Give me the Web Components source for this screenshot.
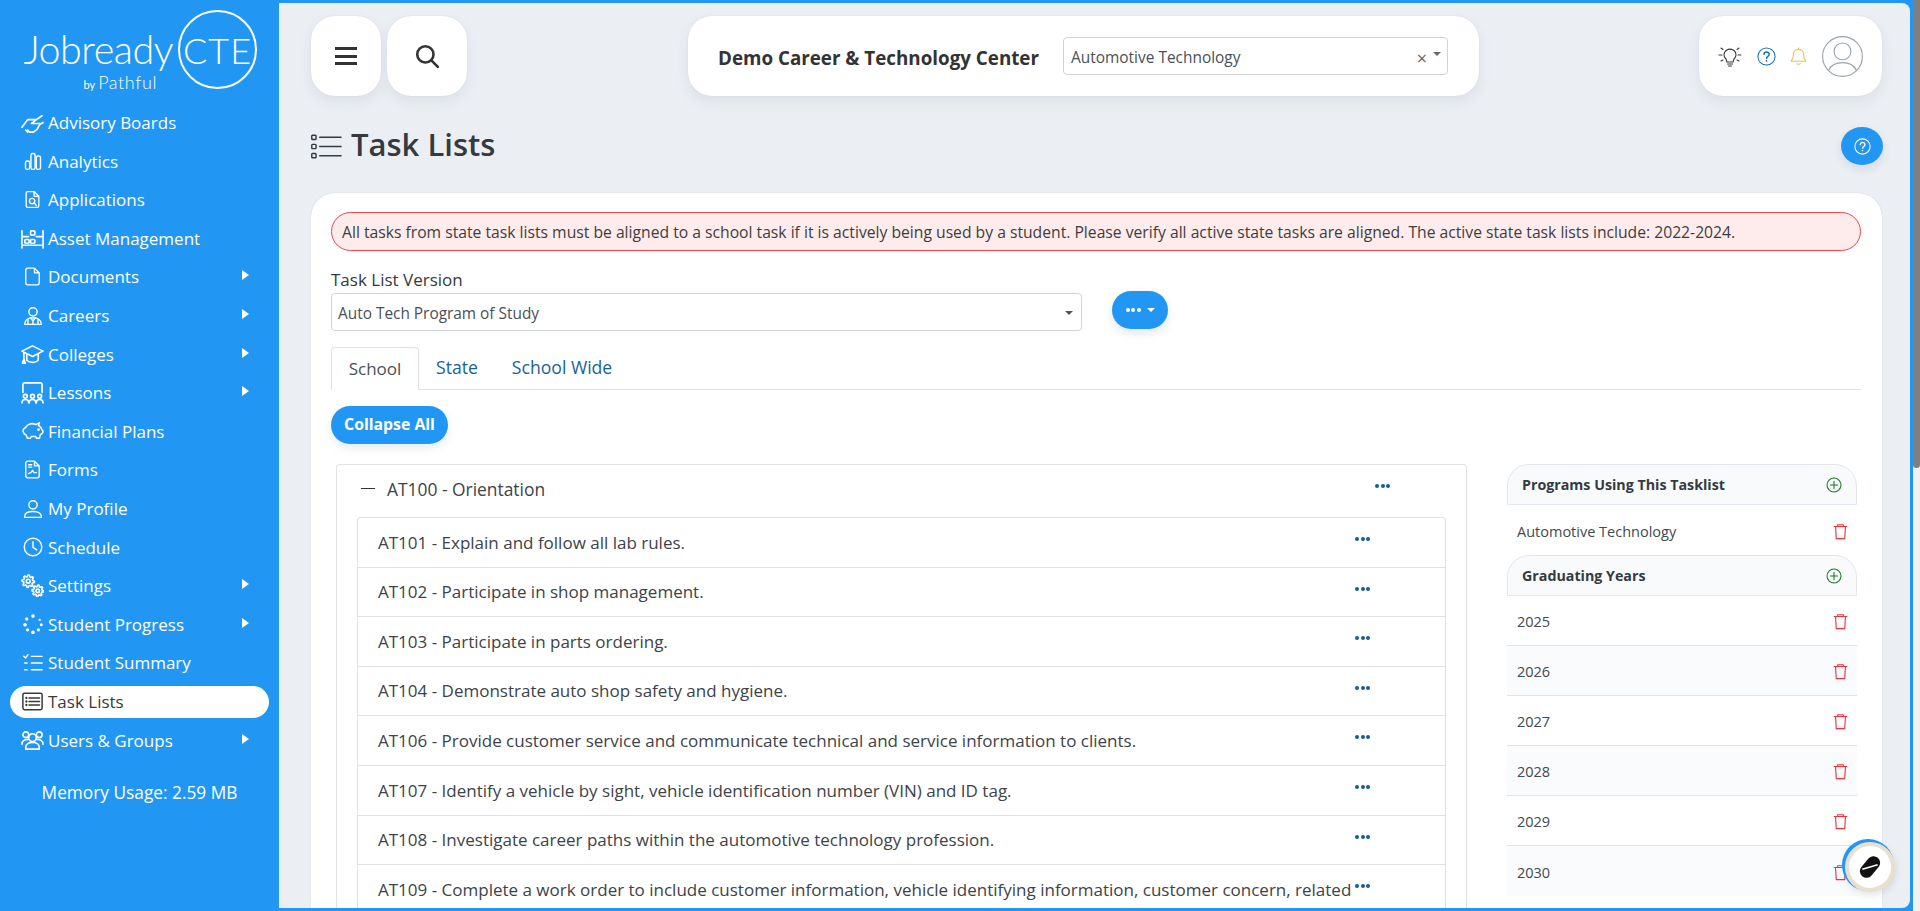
<!DOCTYPE html>
<html lang="en">
<head>
<meta charset="utf-8">
<title>Task Lists</title>
<style>
  html, body { margin: 0; height: 100%; overflow: hidden; background: #2196f3; }
  body { font-family: "Open Sans", "Liberation Sans", sans-serif; color: #343a40; }
</style>
</head>
<body>
<app-shell>
  <side-nav slot="nav"></side-nav>
  <top-bar></top-bar>
  <page-title></page-title>
  <task-card></task-card>
</app-shell>

<script>
// small gear outline, teeth are just a wobble on the radius
function gear(cx, cy, r, inner) {
  let d = '';
  const n = 8;
  for (let i = 0; i < n * 4; i++) {
    const a = (i / (n * 4)) * Math.PI * 2;
    const rad = (i % 4 < 2) ? r : inner;
    d += `${i ? 'L' : 'M'}${(cx + Math.cos(a) * rad).toFixed(2)} ${(cy + Math.sin(a) * rad).toFixed(2)}`;
  }
  return `<path d="${d}z"/>`;
}

const ICONS = {
  handshake: '<path d="M1 17L7 9h9l-5 4h9l-3 6-4 3H9l-2-2M16 9l6-4M20 14l3-2M5 20l2 2"/>',
  bars: '<rect x="3" y="12" width="5" height="10" rx="2"/><rect x="9.500" y="3" width="5" height="19" rx="2"/><rect x="16" y="6" width="5" height="16" rx="2"/>',
  filesearch: '<path d="M6 2h8l6 6v12a2 2 0 0 1-2 2H6a2 2 0 0 1-2-2V4a2 2 0 0 1 2-2zM14 2v6h6"/><circle cx="11.500" cy="14" r="3.400"/><path d="M14 16.500l3 3"/>',
  asset: '<path d="M1 4v18M23 4v18M1 10h7M16 10h7M1 19h22"/><rect x="4" y="13" width="4.500" height="4" rx="1"/><rect x="10" y="13" width="4.500" height="4" rx="1"/><rect x="10" y="4" width="4.500" height="4.500" rx="1"/>',
  file: '<path d="M6 1.500h8.500l6 6V20a2.500 2.500 0 0 1-2.500 2.500H6A2.500 2.500 0 0 1 3.500 20V4A2.500 2.500 0 0 1 6 1.500zM14.500 1.500v6h6"/>',
  career: '<circle cx="12" cy="7" r="5"/><path d="M2 22c0-5 4-8 10-8s10 3 10 8zM9 14l3 4 3-4M12 18v4M6 16v6M18 16v6"/>',
  cap: '<path d="M12 3L1 8.500 12 14l11-5.500zM6 11.500V18c3 3 9 3 12 0v-6.500M3 10v7"/><path d="M1.500 21l1.500-4 1.500 4z"/>',
  lesson: '<path d="M2 12V4a2 2 0 0 1 2-2h16a2 2 0 0 1 2 2v8"/><circle cx="4.500" cy="16" r="2"/><circle cx="12" cy="16" r="2"/><circle cx="19.500" cy="16" r="2"/><path d="M1 23c0-5 7-5 7 0M8.500 23c0-5 7-5 7 0M16 23c0-5 7-5 7 0"/>',
  piggy: '<path d="M3 9c-3 1-2 6 1 7 1 1 1 2 2 4h3l1-2h5l1 2h3l1-4c2-1 3-2 3-4l-1-1c-1-3-2-4-4-5l1-3-4 2c-4-2-9-1-11 3z"/><circle cx="18" cy="10.500" r=".6"/>',
  form: '<path d="M6 1.500h8.500l6 6V20a2.500 2.500 0 0 1-2.500 2.500H6A2.500 2.500 0 0 1 3.500 20V4A2.500 2.500 0 0 1 6 1.500zM14.500 1.500v6h6M7 6h4M7 9h4M7 17l3-1 2-3 2 3h3"/>',
  user: '<circle cx="12" cy="7" r="5"/><path d="M2 22v-1c0-4 4-6 10-6s10 2 10 6v1z"/>',
  clock: '<circle cx="12" cy="12" r="10.500"/><path d="M12 5.500V12.500l4.500 3"/>',
  gears: `${gear(7.500, 7.500, 6.500, 4.800)}<circle cx="7.500" cy="7.500" r="2"/>${gear(17.500, 17.500, 6, 4.400)}<circle cx="17.500" cy="17.500" r="1.800"/>`,
  progress: '<g fill="currentColor" stroke="none"><circle cx="12" cy="2.500" r="2.200"/><circle cx="20" cy="7" r="1.400"/><circle cx="22" cy="13" r="1.800"/><circle cx="18.500" cy="19" r="2"/><circle cx="12" cy="22" r="2.200"/><circle cx="5.500" cy="19" r="2"/><circle cx="2.500" cy="13" r="2.200"/><circle cx="4.500" cy="6" r="2"/></g>',
  summary: '<path d="M1 4l2 2 3-4M10 4h13M10 12h13M10 20h13M2 12h3M2 20h3"/>',
  list: '<rect x="1" y="2.500" width="22" height="19" rx="2"/><path d="M8 8h12M8 12h12M8 16h12"/><g fill="currentColor" stroke="none"><circle cx="5" cy="8" r="1.300"/><circle cx="5" cy="12" r="1.300"/><circle cx="5" cy="16" r="1.300"/></g>',
  users: '<circle cx="5" cy="6" r="3"/><circle cx="19" cy="6" r="3"/><circle cx="12" cy="9" r="4"/><path d="M1 16c0-3 2-5 6-5M23 16c0-3-2-5-6-5M5 21v-2c0-3 3-5 7-5s7 2 7 5v2z"/>',
  search: '<circle cx="10.500" cy="10.500" r="7.500" stroke-width="2.400"/><path d="M16 16l6 6" stroke-width="2.400" stroke-linecap="round"/>',
  help: '<circle cx="12" cy="12" r="10.800"/><path d="M8.800 9.400c0-4.200 6.600-4.200 6.600 0 0 2.600-3.300 2.400-3.300 5" stroke-width="1.900"/><circle cx="12" cy="17.600" r="1.100" fill="currentColor" stroke="none"/>',
  bulb: '<path d="M8 15c-2-2-2.500-4-1.500-6.500C9 4 15 4 17.500 8.500c1 2.500.5 4.500-1.500 6.500l-1 3H9zM9.500 20h5M10.500 22h3M4 11H1M23 11h-3M5 5.500L3 4M19 5.500L21 4M5 16l-2 1M19 16l2 1"/>',
  bell: '<path d="M12 3c-4.500 0-6.500 3-6.500 7 0 4-1 6-3 8h19c-2-2-3-4-3-8 0-4-2-7-6.500-7zM12 1v2M10 21c1 1.200 3 1.200 4 0"/>',
  avatar: '<circle cx="20" cy="20" r="19.400"/><circle cx="20" cy="15" r="8.200"/><path d="M6.500 33.500C9 28 14 26 20 26s11 2 13.500 7.500"/>',
  plus: '<circle cx="12" cy="12" r="10.500"/><path d="M12 6.500v11M6.500 12h11"/>',
  trash: '<path d="M3 5h18M8 5V2.500h8V5M5 5l1 17h12l1-17"/>',
  outline: '<g fill="none"><rect x="0.800" y="0.800" width="4.400" height="4.400" rx=".8"/><rect x="0.800" y="10.300" width="4.400" height="4.400" rx=".8"/><rect x="0.800" y="19.800" width="4.400" height="4.400" rx=".8"/><path d="M9 3h22M9 12.500h22M9 22h22"/></g>',
};

class IconGlyph extends HTMLElement {
  constructor() {
    super();
    this.shadowDOM = this.attachShadow({ mode: 'open' });
  }

  connectedCallback() {
    const name = this.getAttribute('name');
    const w = this.getAttribute('w') || 24;
    const h = this.getAttribute('h') || w;
    const box = this.getAttribute('box') || '0 0 24 24';
    const sw = this.getAttribute('sw') || 1.6;
    this.shadowDOM.innerHTML = `
      <style>
        :host { display: inline-flex; flex: none; align-items: center; justify-content: center; line-height: 0; }
        svg { fill: none; stroke: currentColor; stroke-linejoin: round; stroke-linecap: round; }
      </style>
      <svg width="${w}" height="${h}" viewBox="${box}" stroke-width="${sw}">${ICONS[name]}</svg>`;
  }
}
customElements.define('icon-glyph', IconGlyph);

class NavItem extends HTMLElement {
  constructor() {
    super();
    this.shadowDOM = this.attachShadow({ mode: 'open' });
  }

  connectedCallback() {
    const caret = this.hasAttribute('caret') ? '<span class="caret"></span>' : '';
    this.shadowDOM.innerHTML = `
      <style>
        :host { display: flex; align-items: center; height: 38.6px; margin: 0 10px; padding-left: 11px; padding-right: 20px; border-radius: 17px; color: #fff; font-size: 17px; box-sizing: border-box; }
        :host([active]) { background: #fff; color: #3a3a3a; height: 32px; margin-top: 3.300px; margin-bottom: 3.300px; }
        .ic { width: 23px; display: flex; justify-content: center; margin-right: 4px; }
        .label { flex: 1; }
        .caret { width: 0; height: 0; border-left: 7px solid #fff; border-top: 5.500px solid transparent; border-bottom: 5.500px solid transparent; margin-top: -3px; }
      </style>
      <span class="ic"><icon-glyph name="${this.getAttribute('icon')}" w="${this.getAttribute('w') || 20}" sw="1.700"></icon-glyph></span>
      <span class="label"><slot></slot></span>${caret}`;
  }
}
customElements.define('nav-item', NavItem);

class SideNav extends HTMLElement {
  constructor() {
    super();
    this.shadowDOM = this.attachShadow({ mode: 'open' });
  }

  connectedCallback() {
    const items = [
      ['handshake', 'Advisory Boards', 0, 23], ['bars', 'Analytics', 0, 20], ['filesearch', 'Applications', 0, 19],
      ['asset', 'Asset Management', 0, 23], ['file', 'Documents', 1, 19], ['career', 'Careers', 1, 20],
      ['cap', 'Colleges', 1, 23], ['lesson', 'Lessons', 1, 23], ['piggy', 'Financial Plans', 0, 22],
      ['form', 'Forms', 0, 19], ['user', 'My Profile', 0, 20], ['clock', 'Schedule', 0, 20],
      ['gears', 'Settings', 1, 23], ['progress', 'Student Progress', 1, 20], ['summary', 'Student Summary', 0, 20],
      ['list', 'Task Lists', 0, 21, 1], ['users', 'Users & Groups', 1, 23],
    ];
    const html = items.map(([icon, label, caret, w, active]) => `
      <nav-item icon="${icon}" w="${w}" ${caret ? 'caret' : ''} ${active ? 'active' : ''}>${label.replace('&', '&amp;')}</nav-item>`).join('');
    this.shadowDOM.innerHTML = `
      <style>
        :host { display: block; width: 279px; flex: none; color: #fff; }
        .logo { height: 100.300px; display: flex; padding: 7px 0 0 21px; box-sizing: border-box; font-family: "Lato", sans-serif; }
        .word { display: flex; flex-direction: column; align-items: flex-end; margin-top: 18px; width: 157px; }
        .jobready { font-size: 39.500px; font-weight: 300; line-height: 41px; letter-spacing: -.5px; margin-right: 5px; }
        .by { font-size: 11px; line-height: 20px; margin-top: 3px; margin-right: 21px; }
        .by b { font-size: 18px; font-weight: 300; letter-spacing: .6px; margin-left: 3px; }
        .cte { width: 79px; height: 79px; box-sizing: border-box; border: 2px solid #fff; border-radius: 50%; display: flex; align-items: center; justify-content: center; font-size: 36px; font-weight: 300; letter-spacing: 1px; flex: none; }
        .mem { text-align: center; font-size: 17.300px; margin-top: 24px; line-height: 20px; }
      </style>
      <div class="logo">
        <div class="word">
          <span class="jobready">Jobready</span>
          <span class="by">by<b>Pathful</b></span>
        </div>
        <div class="cte">CTE</div>
      </div>
      ${html}
      <div class="mem">Memory Usage: 2.59 MB</div>`;
  }
}
customElements.define('side-nav', SideNav);

class ToolCard extends HTMLElement {
  constructor() {
    super();
    this.shadowDOM = this.attachShadow({ mode: 'open' });
  }

  connectedCallback() {
    this.shadowDOM.innerHTML = `
      <style>
        :host { display: flex; align-items: center; justify-content: center; height: 80px; background: #fff; border-radius: 24px; box-shadow: 0 6px 14px rgba(60, 80, 110, .08), 0 0 1px rgba(60, 80, 110, .2); box-sizing: border-box; }
      </style>
      <slot></slot>`;
  }
}
customElements.define('tool-card', ToolCard);

class TopBar extends HTMLElement {
  constructor() {
    super();
    this.shadowDOM = this.attachShadow({ mode: 'open' });
  }

  connectedCallback() {
    this.shadowDOM.innerHTML = `
      <style>
        :host { display: flex; justify-content: space-between; align-items: flex-start; color: #343a40; }
        .left { display: flex; gap: 6px; }
        .burger { display: flex; flex-direction: column; gap: 4.500px; width: 22px; }
        .burger i { display: block; height: 3px; background: #333; }
        .school { font-size: 18.800px; font-weight: 700; margin-right: 24px; color: #333; margin-top: 3px; white-space: nowrap; }
        .pick { width: 385px; height: 38px; box-sizing: border-box; border: 1px solid #cfd3d9; border-radius: 4px; display: flex; align-items: center; padding: 1px 6px 0 7px; font-size: 15.450px; color: #495057; }
        .pick span { flex: 1; }
        .x { color: #666; font-size: 18px; margin-right: 6px; font-style: normal; margin-top: 3px; }
        .arrow { width: 0; height: 0; border-left: 4px solid transparent; border-right: 4px solid transparent; border-top: 4px solid #666; margin-top: -6px; }
      </style>
      <div class="left">
        <tool-card style="width:70px"><div class="burger"><i></i><i></i><i></i></div></tool-card>
        <tool-card style="width:80px;color:#333"><icon-glyph name="search" w="26"></icon-glyph></tool-card>
      </div>
      <tool-card style="width:791px">
        <span class="school">Demo Career &amp; Technology Center</span>
        <div class="pick"><span>Automotive Technology</span><i class="x">×</i><i class="arrow"></i></div>
      </tool-card>
      <tool-card style="width:183px;justify-content:flex-start;padding-left:19px">
        <icon-glyph name="bulb" w="24" sw="1.100" style="color:#3a3a3a"></icon-glyph>
        <icon-glyph name="help" w="19" sw="1.300" style="color:#1a6fae;margin-left:15px"></icon-glyph>
        <icon-glyph name="bell" w="19" sw="1.300" style="color:#f0c040;margin-left:13px"></icon-glyph>
        <icon-glyph name="avatar" w="41" box="0 0 40 40" sw="1.100" style="color:#9aa3ad;margin-left:14px"></icon-glyph>
      </tool-card>`;
  }
}
customElements.define('top-bar', TopBar);

class PageTitle extends HTMLElement {
  constructor() {
    super();
    this.shadowDOM = this.attachShadow({ mode: 'open' });
  }

  connectedCallback() {
    this.shadowDOM.innerHTML = `
      <style>
        :host { display: flex; align-items: center; height: 38px; margin-top: 31px; margin-bottom: 28px; color: #343a40; }
        .list { margin-right: 9px; }
        h1 { margin: -5px 0 0; flex: 1; font-size: 31px; font-weight: 600; line-height: 38px; }
        .help { width: 42px; height: 38px; margin-right: -1px; border-radius: 50%; background: #2196f3; color: #fff; display: flex; align-items: center; justify-content: center; box-shadow: 0 4px 10px rgba(60, 80, 110, .12); }
      </style>
      <icon-glyph class="list" name="outline" w="31" h="25" box="0 0 32 25" sw="1.500"></icon-glyph>
      <h1>Task Lists</h1>
      <div class="help"><icon-glyph name="help" w="17" sw="1.500"></icon-glyph></div>`;
  }
}
customElements.define('page-title', PageTitle);

class TaskRow extends HTMLElement {
  constructor() {
    super();
    this.shadowDOM = this.attachShadow({ mode: 'open' });
  }

  connectedCallback() {
    this.shadowDOM.innerHTML = `
      <style>
        :host { display: flex; padding: 11.550px 76px 11.550px 20px; border-bottom: 1px solid #dfe1e4; font-size: 17px; line-height: 25.500px; color: #3d4349; position: relative; }
        span { flex: 1; }
        dot-menu { position: absolute; right: 75px; top: 19px; }
      </style>
      <span><slot></slot></span>
      <dot-menu></dot-menu>`;
  }
}
customElements.define('task-row', TaskRow);

class DotMenu extends HTMLElement {
  constructor() {
    super();
    this.shadowDOM = this.attachShadow({ mode: 'open' });
  }

  connectedCallback() {
    const c = this.getAttribute('color') || '#155e95';
    this.shadowDOM.innerHTML = `
      <style>
        :host { display: inline-flex; gap: 1.500px; }
        i { width: 4px; height: 4px; border-radius: 50%; background: ${c}; }
      </style>
      <i></i><i></i><i></i>`;
  }
}
customElements.define('dot-menu', DotMenu);

class SideList extends HTMLElement {
  constructor() {
    super();
    this.shadowDOM = this.attachShadow({ mode: 'open' });
  }

  connectedCallback() {
    const title = this.getAttribute('title');
    const rows = this.getAttribute('rows').split('|');
    const bordered = this.hasAttribute('bordered');
    this.shadowDOM.innerHTML = `
      <style>
        :host { display: block; }
        header { height: 41px; box-sizing: border-box; display: flex; align-items: center; justify-content: space-between; padding: 0 14px 0 14px; background: #f9fafb; border: 1px solid #e2e7ee; border-radius: 22px 22px 0 0; font-weight: 700; font-size: 14.250px; color: #343a40; }
        .row { height: 50px; box-sizing: border-box; display: flex; align-items: center; justify-content: space-between; padding: 2px 8px 0 10px; font-size: 14.500px; color: #424950; }
        .row.b { border-bottom: 1px solid #dde4ec; }
        .row.b:nth-child(even) { background: #fafbfd; }
        .row:last-child { border-bottom: 0; }
      </style>
      <header>${title}<icon-glyph name="plus" w="16" sw="1.600" style="color:#1b7a2b"></icon-glyph></header>
      <section>
      ${rows.map((r) => `<div class="row ${bordered ? 'b' : ''}">${r}<icon-glyph name="trash" w="17" sw="1.600" style="color:#f5303a"></icon-glyph></div>`).join('')}
      </section>`;
  }
}
customElements.define('side-list', SideList);

class TaskCard extends HTMLElement {
  constructor() {
    super();
    this.shadowDOM = this.attachShadow({ mode: 'open' });
  }

  connectedCallback() {
    const tasks = [
      'AT101 - Explain and follow all lab rules.',
      'AT102 - Participate in shop management.',
      'AT103 - Participate in parts ordering.',
      'AT104 - Demonstrate auto shop safety and hygiene.',
      'AT106 - Provide customer service and communicate technical and service information to clients.',
      'AT107 - Identify a vehicle by sight, vehicle identification number (VIN) and ID tag.',
      'AT108 - Investigate career paths within the automotive technology profession.',
      'AT109 - Complete a work order to include customer information, vehicle identifying information, customer concern, related service history, cause, and correction.',
    ];
    this.shadowDOM.innerHTML = `
      <style>
        :host { display: block; background: #fff; border-radius: 24px 24px 0 0; padding: 19px 21px 20px 20px; box-shadow: 0 0 1px rgba(60, 80, 110, .3); color: #343a40; }
        .alert { height: 39px; box-sizing: border-box; display: flex; align-items: center; padding: 0 10px; background: #feecec; border: 1px solid #f4434c; border-radius: 20px; font-size: 15.700px; color: #3d3d3d; white-space: nowrap; }
        label { display: block; margin-top: 17px; font-size: 17px; line-height: 24px; }
        .ver { display: flex; align-items: flex-start; gap: 30px; }
        .sel { width: 751px; height: 38px; box-sizing: border-box; margin-top: 1px; border: 1px solid #cfd3d9; border-radius: 4px; display: flex; align-items: center; justify-content: space-between; padding: 2px 8px 0 6px; font-size: 15.400px; color: #495057; }
        .arrow { width: 0; height: 0; border-left: 4px solid transparent; border-right: 4px solid transparent; border-top: 4px solid #555; }
        .more { width: 56px; height: 38px; margin-top: -1px; border-radius: 19px; background: #2196f3; display: flex; align-items: center; justify-content: center; gap: 6px; box-shadow: 0 4px 10px rgba(60, 80, 110, .15); }
        .more .arrow { border-top-color: #fff; }
        .tabs { display: flex; margin-top: 16px; border-bottom: 1px solid #dfe1e4; height: 42px; font-size: 17.600px; color: #16639c; }
        .tab { padding: 0 17px; height: 42px; line-height: 41px; box-sizing: border-box; }
        .tab.on { width: 88px; padding: 0; text-align: center; color: #495057; background: #fff; border: 1px solid #dfe1e4; border-bottom: 0; border-radius: 4px 4px 0 0; height: 43px; font-size: 17px; }
        .collapse { display: inline-flex; align-items: center; justify-content: center; width: 117px; height: 38px; margin-top: 16px; border-radius: 19px; background: #2196f3; color: #fff; font-size: 15.800px; font-weight: 700; box-shadow: 0 4px 10px rgba(60, 80, 110, .12); padding-bottom: 3px; box-sizing: border-box; }
        .body { display: flex; align-items: flex-start; margin: 20px 0 0 5px; }
        .tree { width: 1131px; box-sizing: border-box; border: 1px solid #dfe1e4; border-bottom: 0; border-radius: 4px 4px 0 0; padding: 0 20px; flex: none; }
        .head { height: 52px; display: flex; align-items: center; font-size: 17.400px; color: #3d4349; position: relative; padding-bottom: 5px; box-sizing: border-box; }
        .dash { width: 14px; height: 1.500px; background: #333; margin: 0 12px 0 4px; }
        .head dot-menu { position: absolute; right: 56px; top: 19px; }
        .items { border: 1px solid #dfe1e4; border-bottom: 0; border-radius: 4px 4px 0 0; }
        .side { width: 350px; flex: none; margin-left: 40px; }
      </style>
      <div class="alert">All tasks from state task lists must be aligned to a school task if it is actively being used by a student. Please verify all active state tasks are aligned. The active state task lists include: 2022-2024.</div>
      <label>Task List Version</label>
      <div class="ver">
        <div class="sel">Auto Tech Program of Study<i class="arrow"></i></div>
        <div class="more"><dot-menu color="#fff"></dot-menu><i class="arrow"></i></div>
      </div>
      <div class="tabs">
        <div class="tab on">School</div><div class="tab">State</div><div class="tab">School Wide</div>
      </div>
      <div class="collapse">Collapse All</div>
      <div class="body">
        <div class="tree">
          <div class="head"><i class="dash"></i>AT100 - Orientation<dot-menu></dot-menu></div>
          <div class="items">${tasks.map((t) => `<task-row>${t}</task-row>`).join('')}</div>
        </div>
        <div class="side">
          <side-list title="Programs Using This Tasklist" rows="Automotive Technology"></side-list>
          <side-list bordered title="Graduating Years" rows="2025|2026|2027|2028|2029|2030"></side-list>
        </div>
      </div>`;
  }
}
customElements.define('task-card', TaskCard);

class AppShell extends HTMLElement {
  constructor() {
    super();
    this.shadowDOM = this.attachShadow({ mode: 'open' });
  }

  connectedCallback() {
    this.shadowDOM.innerHTML = `
      <style>
        :host { display: flex; height: 911px; width: 1920px; padding: 3px 0 3px 0; box-sizing: border-box; background: #2196f3; position: relative; overflow: hidden; }
        main { flex: none; width: 1631px; height: 905px; overflow: hidden; background: #ebeef3; border-radius: 0 8px 8px 0; padding: 13px 28px 0 32px; box-sizing: border-box; }
        .bar { position: absolute; top: 0; right: 0; width: 7px; height: 911px; background: #f1f1f1; }
        .bar i { display: block; height: 468px; background: #7f7f7f; border-radius: 0 0 4px 4px; }
        .fab { position: absolute; left: 1845px; top: 842px; width: 50px; height: 50px; box-sizing: border-box; border-radius: 50%; background: #fff; border: 4px solid #e9dfcf; display: flex; align-items: center; justify-content: center; box-shadow: -2px -2px 0 1px #2196f3, 0 3px 8px rgba(0, 0, 0, .12); }
      </style>
      <slot name="nav"></slot>
      <main><slot></slot></main>
      <div class="bar"><i></i></div>
      <div class="fab">
        <svg width="22" height="22" viewBox="0 0 20 20"><g transform="rotate(-50 10 10)"><rect x="-1" y="4" width="22" height="12" rx="6" fill="#111"/><path d="M4 6L16 14" stroke="#fff" stroke-width="1.500"/></g></svg>
      </div>`;
  }
}
customElements.define('app-shell', AppShell);
</script>
</body>
</html>
